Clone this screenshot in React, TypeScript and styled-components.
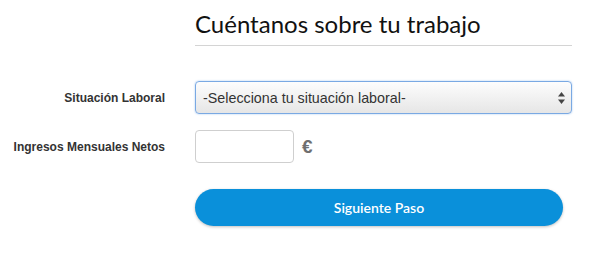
import React from "react";
import styled, { createGlobalStyle } from "styled-components";

const GlobalStyle = createGlobalStyle`
  body {
    margin: 0;
    background: #fff;
    font-family: "Liberation Sans", Arial, sans-serif;
  }
`;

const Form = styled.form`
  display: grid;
  grid-template-columns: 165px 377px;
  column-gap: 30px;
  align-items: center;
  padding-top: 9px;
`;

const Header = styled.div`
  grid-column: 2;
  border-bottom: 1px solid #d4d4d4;
  padding-bottom: 7px;
  margin-bottom: 35px;
`;

const Title = styled.h1`
  margin: 0;
  font-family: Lato, "Open Sans", sans-serif;
  font-weight: 400;
  font-size: 24px;
  line-height: 29px;
  color: #111;
`;

const Label = styled.label<{ $gap?: number }>`
  grid-column: 1;
  text-align: right;
  font-size: 12px;
  font-weight: 700;
  color: #333;
  margin-bottom: ${({ $gap }) => $gap ?? 16}px;
`;

const Field = styled.div<{ $gap?: number }>`
  grid-column: 2;
  display: flex;
  align-items: center;
  gap: 8px;
  margin-bottom: ${({ $gap }) => $gap ?? 16}px;
`;

const Select = styled.div`
  flex: 1;
  height: 33px;
  box-sizing: border-box;
  border: 1px solid #7aa9e3;
  border-radius: 4px;
  box-shadow: 0 0 2px rgba(100, 160, 230, 0.6);
  background: linear-gradient(#fdfdfd, #e6e6e6);
  display: flex;
  align-items: center;
  justify-content: space-between;
  padding: 0 6px 0 7px;
  font-size: 14.3px;
  color: #333;
`;

const Arrows = styled.svg`
  width: 7px;
  height: 12px;
`;

const Input = styled.input`
  width: 99px;
  height: 33px;
  box-sizing: border-box;
  border: 1px solid #cfcfcf;
  border-radius: 4px;
  outline: none;
  font-size: 14px;
`;

const Euro = styled.span`
  font-size: 19px;
  font-weight: 700;
  color: #6f6f6f;
`;

const Button = styled.button`
  width: 368px;
  height: 37px;
  border: none;
  border-radius: 19px;
  background: #0a90da;
  box-shadow: 0 1px 3px rgba(0, 0, 0, 0.25);
  color: #fff;
  font-family: Lato, "Open Sans", sans-serif;
  font-weight: 600;
  font-size: 14px;
  cursor: pointer;
`;

export default function App() {
  return (
    <>
      <GlobalStyle />
      <Form>
        <Header>
          <Title>Cuéntanos sobre tu trabajo</Title>
        </Header>

        <Label>Situación Laboral</Label>
        <Field>
          <Select>
            <span>-Selecciona tu situación laboral-</span>
            <Arrows viewBox="0 0 7 12">
              <path d="M3.5 0 L7 4.5 H0 Z" fill="#444" />
              <path d="M3.5 12 L7 7.5 H0 Z" fill="#444" />
            </Arrows>
          </Select>
        </Field>

        <Label $gap={26}>Ingresos Mensuales Netos</Label>
        <Field $gap={26}>
          <Input type="text" />
          <Euro>€</Euro>
        </Field>

        <Field>
          <Button type="button">Siguiente Paso</Button>
        </Field>
      </Form>
    </>
  );
}
